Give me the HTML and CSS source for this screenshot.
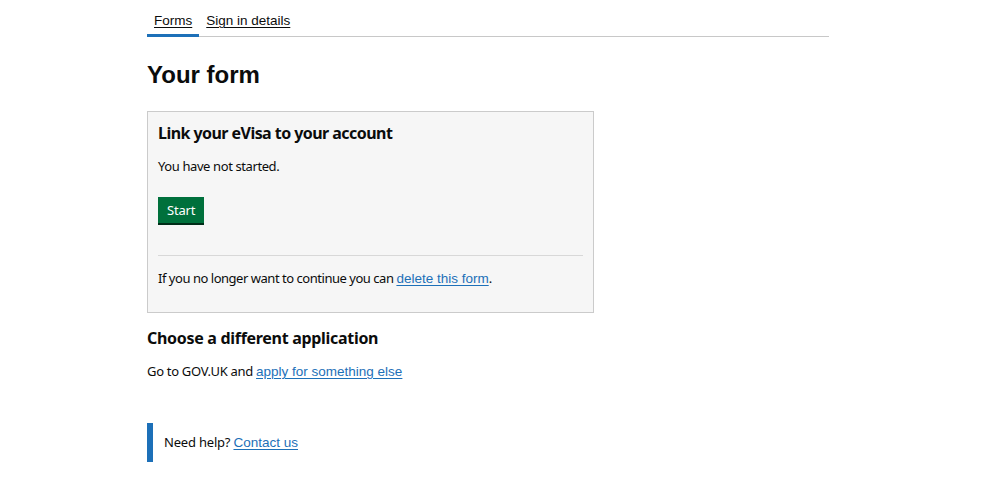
FILE: index.html
```html
<!DOCTYPE html>
<html lang="en">
<head>
    <meta charset="UTF-8">
    <meta name="viewport" content="width=device-width, initial-scale=1.0">
    <title>Your form</title>
    <link rel="stylesheet" href="styles.css">
</head>
<body>
    <div class="page">
        <nav class="tabs">
            <a href="#" class="tab active">Forms</a>
            <a href="#" class="tab">Sign in details</a>
        </nav>

        <h1>Your form</h1>

        <div class="form-card">
            <h2>Link your eVisa to your account</h2>
            <p>You have not started.</p>
            <button type="button" class="button">Start</button>
            <hr>
            <p class="delete-note">If you no longer want to continue you can <a href="#">delete this form</a>.</p>
        </div>

        <h2 class="section-title">Choose a different application</h2>
        <p class="other-app">Go to GOV.UK and <a href="#">apply for something else</a></p>

        <div class="help">
            <p>Need help? <a href="#">Contact us</a></p>
        </div>
    </div>
</body>
</html>
```

FILE: styles.css
```css
body {
    margin: 0;
    padding: 0;
    background: #fff;
    color: #0b0c0c;
    font-family: "Noto Sans", "Liberation Sans", sans-serif;
}
.page {
    width: 682px;
    margin: 0 0 0 147px;
}
a {
    color: #1d70b8;
    font-family: "Liberation Sans", Arial, sans-serif;
    font-size: 13.5px;
    letter-spacing: 0;
    text-decoration: underline;
    text-underline-offset: 2px;
    text-decoration-thickness: 1px;
}
.tabs {
    display: flex;
    padding-top: 13px;
    border-bottom: 1px solid #c8c8c8;
}
.tab {
    color: #0b0c0c;
    padding: 0 7px 6px;
    border-bottom: 3px solid transparent;
    margin-bottom: -1px;
}
.tab.active {
    border-bottom-color: #1d70b8;
}
h1 {
    font-family: "Liberation Sans", Arial, sans-serif;
    font-size: 24px;
    font-weight: bold;
    margin: 24px 0 22px;
}
p {
    font-size: 13px;
    letter-spacing: -0.4px;
    margin: 0;
}
.delete-note {
    letter-spacing: -0.47px;
}
.other-app {
    letter-spacing: -0.3px;
}
.form-card {
    width: 425px;
    background: #f6f6f6;
    border: 1px solid #cbcbcb;
    padding: 10px 10px 25px;
}
.form-card h2 {
    font-size: 16px;
    letter-spacing: -0.55px;
    margin: 0 0 13px;
}
.button {
    display: block;
    margin: 22px 0 32px;
    padding: 4px 9px;
    font-family: "Noto Sans", sans-serif;
    font-size: 13px;
    letter-spacing: -0.2px;
    color: #fff;
    background: #00703c;
    border: none;
    border-radius: 0;
    box-shadow: 0 2px 0 #002d18;
}
.form-card hr {
    border: none;
    border-top: 1px solid #d8d8d8;
    margin: 0 0 13px;
}
.section-title {
    font-size: 16px;
    letter-spacing: -0.3px;
    margin: 14px 0 13px;
}
.help {
    margin-top: 43px;
    border-left: 6px solid #1d70b8;
    padding: 10px 0 11px 11px;
}
.help p {
    letter-spacing: -0.2px;
}
```
